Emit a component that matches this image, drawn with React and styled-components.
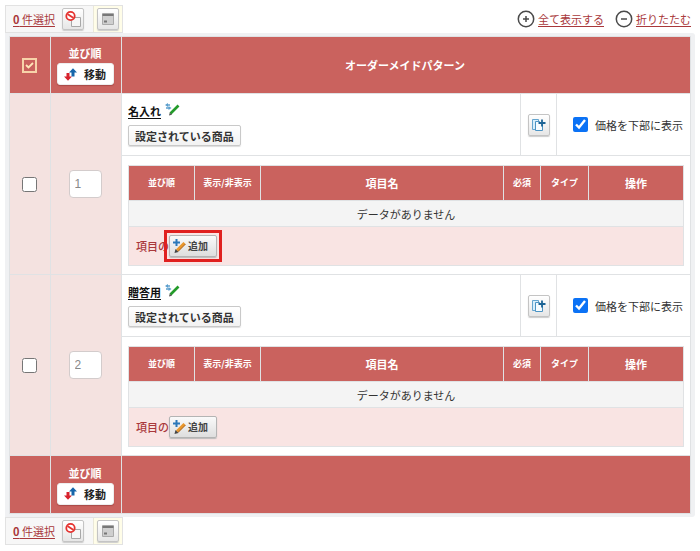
import React, { useState } from "react";
import styled, { createGlobalStyle } from "styled-components";

const RED = "#ca625e";
const LINE = "#e0e2e4";
const LINK = "#a9383b";

const GlobalStyle = createGlobalStyle`
  *, *::before, *::after { box-sizing: border-box; }
  body {
    margin: 0;
    background: #fff;
    color: #333;
    font: 11px/16px "Noto Sans CJK JP", "Noto Sans", sans-serif;
  }
  button, input { font: inherit; color: inherit; margin: 0; }
  button { cursor: pointer; }
  svg { display: block; flex: none; }
`;

const Page = styled.main`
  padding: 5px;
`;

const TopBar = styled.header`
  display: flex;
  justify-content: space-between;
  align-items: center;
  height: 28px;
`;

const BottomBar = styled.footer`
  display: flex;
`;

const Tools = styled.div`
  display: flex;
  height: 28px;
  border: 1px solid #e2e2e2;
  background: #f7f7f7;
`;

const ToolCell = styled.div`
  display: flex;
  align-items: center;
  gap: 7px;
  padding: ${(p) => (p.$tint ? "0 3px" : "0 9px 0 7px")};
  background: ${(p) => (p.$tint ? "#fffde8" : "transparent")};
  border-left: ${(p) => (p.$tint ? "1px solid #e9e7d8" : "0")};
`;

const TextLink = styled.a`
  color: ${LINK};
  font-size: 11px;
  white-space: nowrap;
  text-decoration: underline;
  text-underline-offset: 2px;
`;

const IconButton = styled.button`
  display: grid;
  place-items: center;
  flex: none;
  width: 22px;
  height: 22px;
  padding: 0;
  border: 1px solid #c4c4c4;
  border-radius: 2px;
  background: linear-gradient(#fff, #e6e6e6);
  box-shadow: 0 1px 1px #ccc;
`;

const Toggles = styled.nav`
  display: flex;
  gap: 11px;
  padding-right: 4px;
`;

const Toggle = styled.span`
  display: flex;
  align-items: center;
  gap: 3px;
`;

const Frame = styled.section`
  padding: 3px 4px;
  background: #f0f1f3;
  border-radius: 0 3px 3px 0;
`;

const MainTable = styled.table`
  width: 100%;
  table-layout: fixed;
  border-collapse: collapse;
  background: #fff;
`;

const CheckCol = styled.col`
  width: 41px;
`;

const OrderCol = styled.col`
  width: 71px;
`;

const HeadCell = styled.th`
  height: ${(p) => (p.$foot ? "58px" : "57px")};
  padding: 0 2px 0 0;
  border: 1px solid ${LINE};
  background: ${RED};
  color: #fff;
  font-size: 11px;
  font-weight: 700;
`;

const SideCell = styled.td`
  padding: 0 2px 0 0;
  border: 1px solid ${LINE};
  background: #f4e2e0;
  text-align: center;
`;

const BodyCell = styled.td`
  padding: 0;
  border: 1px solid ${LINE};
`;

const HeadStack = styled.div`
  display: flex;
  flex-direction: column;
  align-items: center;
  gap: 2px;
`;

const MoveButton = styled.button`
  display: flex;
  align-items: center;
  justify-content: center;
  gap: 7px;
  width: 57px;
  height: 22px;
  padding: 0;
  border: 1px solid #eee;
  border-radius: 3px;
  background: #fff;
  color: #222;
  font-size: 11px;
  font-weight: 700;
  box-shadow: 0 1px 1px #a94b48;
`;

const AllCheck = styled.input`
  display: block;
  appearance: none;
  width: 15px;
  height: 15px;
  margin: 0 auto;
  border: 2px solid #f7d3a9;
  background: ${RED};
`;

const CheckWrap = styled.label`
  display: grid;
  place-items: center;
  > * { grid-area: 1 / 1; }
  svg { pointer-events: none; z-index: 1; }
`;

const RowCheck = styled.input`
  display: block;
  width: 15px;
  height: 15px;
  accent-color: #0b72f5;
  margin: 0 auto;
`;

const OrderInput = styled.input`
  width: 33px;
  height: 28px;
  padding: 0 5px;
  border: 1px solid #d3cccc;
  border-radius: 4px;
  background: #fff;
  color: #888;
  font-family: "Liberation Sans", sans-serif;
  font-size: 12px;
  vertical-align: middle;
`;

const PatternHead = styled.div`
  display: flex;
  height: 62px;
  border-bottom: 1px solid ${LINE};
`;

const PatternName = styled.div`
  flex: 1;
  padding: 9px 6px 0;
`;

const NameLine = styled.div`
  display: flex;
  gap: 4px;
  height: 22px;
  padding-bottom: 6px;
`;

const NameLink = styled(TextLink)`
  color: #111;
  font-weight: 700;
`;

const EditButton = styled.button`
  display: flex;
  height: 16px;
  padding: 0;
  border: 0;
  background: none;
`;

const ProductsButton = styled.button`
  height: 21px;
  padding: 0 6px;
  border: 1px solid #c9c9c9;
  border-radius: 2px;
  background: linear-gradient(#fff, #f2f2f2);
  box-shadow: 0 1px 1px #ddd;
  font-size: 11px;
  line-height: 16px;
  font-weight: 700;
`;

const CopyCell = styled.div`
  display: grid;
  place-items: center;
  width: 36px;
  border-left: 1px solid ${LINE};
`;

const PriceCell = styled.div`
  display: flex;
  align-items: center;
  width: 134px;
  padding-left: 16px;
  border-left: 1px solid ${LINE};
`;

const PriceLabel = styled.label`
  display: flex;
  align-items: center;
  gap: 7px;
  white-space: nowrap;
`;

const ItemsWrap = styled.div`
  padding: 9px 6px 8px;
`;

const ItemsTable = styled.table`
  width: 100%;
  table-layout: fixed;
  border-collapse: collapse;
`;

const ItemCol = styled.col`
  width: ${(p) => p.$w};
`;

const ItemHead = styled.th`
  height: 35px;
  padding: 0;
  border: 1px solid ${LINE};
  background: ${RED};
  color: #fff;
  font-size: ${(p) => (p.$small ? "9px" : "11px")};
  font-weight: 700;
`;

const EmptyCell = styled.td`
  height: 26px;
  padding: 0;
  border: 1px solid ${LINE};
  background: #f4f4f4;
  text-align: center;
`;

const AddCell = styled.td`
  height: 39px;
  padding: 0 7px;
  border: 1px solid ${LINE};
  background: #f9e4e3;
`;

const AddLine = styled.div`
  display: flex;
  align-items: center;
  color: ${LINK};
  font-weight: 500;
`;

const AddWrap = styled.div`
  position: relative;
`;

const AddButton = styled.button`
  display: flex;
  align-items: center;
  gap: 2px;
  height: 22px;
  width: 48px;
  padding: 0 2px;
  border: 1px solid #b4b4b4;
  border-radius: 2px;
  background: linear-gradient(#fafafa, #dedede);
  box-shadow: 0 1px 1px #bbb;
  color: #444;
  font-size: 10px;
  font-weight: 700;
  white-space: nowrap;
`;

const Highlight = styled.span`
  position: absolute;
  inset: -5px;
  border: 3px solid #e0201f;
  pointer-events: none;
`;

const BlockIcon = () => (
  <svg width="18" height="18" viewBox="0 0 18 18" fill="none" aria-hidden="true">
    <path d="M7.500 7.500h9v9h-9z" fill="#f6f6f6" stroke="#a8a8a8" />
    <circle cx="6.500" cy="6" r="4.200" fill="#fff" stroke="#e5322f" strokeWidth="1.800" />
    <path d="M3.500 4l6 4" stroke="#e5322f" strokeWidth="1.800" />
  </svg>
);

const WindowIcon = () => (
  <svg width="14" height="14" viewBox="0 0 14 14" fill="none" aria-hidden="true">
    <path d="M1.500 1.500h11v11h-11z" fill="#cfcfcf" stroke="#aaa" />
    <path d="M1.500 3h11" stroke="#777" strokeWidth="2" />
    <path d="M3 9.500h3" stroke="#777" strokeWidth="2" />
  </svg>
);

const CircleIcon = ({ plus }) => (
  <svg width="18" height="18" viewBox="0 0 18 18" fill="none" stroke="#4a4a4a" strokeWidth="1.5" aria-hidden="true">
    <circle cx="9" cy="9" r="7.7" />
    <path d={plus ? "M6 9h6M9 6v6" : "M6 9h6"} />
  </svg>
);

const MoveIcon = () => (
  <svg width="13" height="13" viewBox="0 0 13 13" aria-hidden="true">
    <path d="M2.500 5h3v3.500H8L4 12.800 0 8.500h2.500z" fill="#d7222c" />
    <path d="M9 .2L13 4.500h-2.500V8.500h-3v-4H5z" fill="#1766aa" />
  </svg>
);

const EditIcon = () => (
  <svg width="15" height="13" viewBox="0 0 15 13" fill="none" aria-hidden="true">
    <path d="M5.500 10.500l8-8" stroke="#249b2a" strokeWidth="2.600" />
    <path d="M4 12.500l.8-3 2.200 2.200z" fill="#555" />
    <path d="M3 0v4L0 2zM3.500 3v4l3-2z" fill="#5b9fcd" />
    <path d="M2 2h3M1 5h3" stroke="#5b9fcd" strokeWidth="1.500" />
  </svg>
);

const CopyIcon = () => (
  <svg width="17" height="16" viewBox="0 0 17 16" fill="none" aria-hidden="true">
    <path d="M2.500 2.500h6v10h-6z" fill="#d9effb" stroke="#64a5cf" />
    <path d="M5.500 4.500h4l3 3v6h-7z" fill="#f6fcff" stroke="#4c94c4" />
    <path d="M12 2.500v7M8.500 6h7" stroke="#1d6495" strokeWidth="1.800" />
  </svg>
);

const PencilPlusIcon = () => (
  <svg width="14" height="16" viewBox="0 0 14 16" fill="none" aria-hidden="true">
    <path d="M4.500 1v7M1 4.500h7" stroke="#2b78b9" strokeWidth="2" />
    <path d="M5 12.500L12.500 5" stroke="#e9972b" strokeWidth="3" />
    <path d="M6 13.500l7.500-7.500" stroke="#a85e18" />
    <path d="M2.500 15l1-4 3 3z" fill="#444" />
  </svg>
);

const TickIcon = () => (
  <svg width="11" height="11" viewBox="0 0 11 11" fill="none" stroke="#ffe7b8" strokeWidth="1.800" aria-hidden="true">
    <path d="M2 5l2.500 2.500L9 3" />
  </svg>
);

function Selection() {
  return (
    <Tools>
      <ToolCell>
        <TextLink href="#selected"><b>0</b> 件選択</TextLink>
        <IconButton type="button" aria-label="選択解除"><BlockIcon /></IconButton>
      </ToolCell>
      <ToolCell $tint>
        <IconButton type="button" aria-label="一括操作"><WindowIcon /></IconButton>
      </ToolCell>
    </Tools>
  );
}

function OrderHeading() {
  return (
    <HeadStack>
      並び順
      <MoveButton type="button"><MoveIcon />移動</MoveButton>
    </HeadStack>
  );
}

function Items({ highlighted }) {
  return (
    <ItemsTable>
      <colgroup>
        <ItemCol $w="66px" />
        <ItemCol $w="66px" />
        <ItemCol $w="auto" />
        <ItemCol $w="37px" />
        <ItemCol $w="48px" />
        <ItemCol $w="95px" />
      </colgroup>
      <thead>
        <tr>
          <ItemHead $small>並び順</ItemHead>
          <ItemHead $small>表示/非表示</ItemHead>
          <ItemHead>項目名</ItemHead>
          <ItemHead $small>必須</ItemHead>
          <ItemHead $small>タイプ</ItemHead>
          <ItemHead>操作</ItemHead>
        </tr>
      </thead>
      <tbody>
        <tr><EmptyCell colSpan={6}>データがありません</EmptyCell></tr>
        <tr>
          <AddCell colSpan={6}>
            <AddLine>
              項目の
              <AddWrap>
                <AddButton type="button"><PencilPlusIcon />追加</AddButton>
                {highlighted && <Highlight />}
              </AddWrap>
            </AddLine>
          </AddCell>
        </tr>
      </tbody>
    </ItemsTable>
  );
}

function PatternRow({ name, order, highlighted }) {
  const [value, setValue] = useState(order);
  return (
    <tr>
      <SideCell><RowCheck type="checkbox" aria-label={name} /></SideCell>
      <SideCell>
        <OrderInput aria-label={`${name} 並び順`} value={value} onChange={(e) => setValue(e.target.value)} />
      </SideCell>
      <BodyCell>
        <PatternHead>
          <PatternName>
            <NameLine>
              <NameLink href="#pattern">{name}</NameLink>
              <EditButton type="button" aria-label={`${name} 編集`}><EditIcon /></EditButton>
            </NameLine>
            <ProductsButton type="button">設定されている商品</ProductsButton>
          </PatternName>
          <CopyCell>
            <IconButton type="button" aria-label="複製"><CopyIcon /></IconButton>
          </CopyCell>
          <PriceCell>
            <PriceLabel><RowCheck type="checkbox" defaultChecked />価格を下部に表示</PriceLabel>
          </PriceCell>
        </PatternHead>
        <ItemsWrap><Items highlighted={highlighted} /></ItemsWrap>
      </BodyCell>
    </tr>
  );
}

export default function App() {
  return (
    <Page>
      <GlobalStyle />
      <TopBar>
        <Selection />
        <Toggles>
          <Toggle><CircleIcon plus /><TextLink href="#expand">全て表示する</TextLink></Toggle>
          <Toggle><CircleIcon /><TextLink href="#collapse">折りたたむ</TextLink></Toggle>
        </Toggles>
      </TopBar>
      <Frame>
        <MainTable>
          <colgroup><CheckCol /><OrderCol /><col /></colgroup>
          <thead>
            <tr>
              <HeadCell>
                <CheckWrap>
                  <AllCheck type="checkbox" aria-label="全て選択" defaultChecked />
                  <TickIcon />
                </CheckWrap>
              </HeadCell>
              <HeadCell><OrderHeading /></HeadCell>
              <HeadCell>オーダーメイドパターン</HeadCell>
            </tr>
          </thead>
          <tbody>
            <PatternRow name="名入れ" order="1" highlighted />
            <PatternRow name="贈答用" order="2" />
          </tbody>
          <tfoot>
            <tr>
              <HeadCell $foot />
              <HeadCell $foot><OrderHeading /></HeadCell>
              <HeadCell $foot />
            </tr>
          </tfoot>
        </MainTable>
      </Frame>
      <BottomBar><Selection /></BottomBar>
    </Page>
  );
}
